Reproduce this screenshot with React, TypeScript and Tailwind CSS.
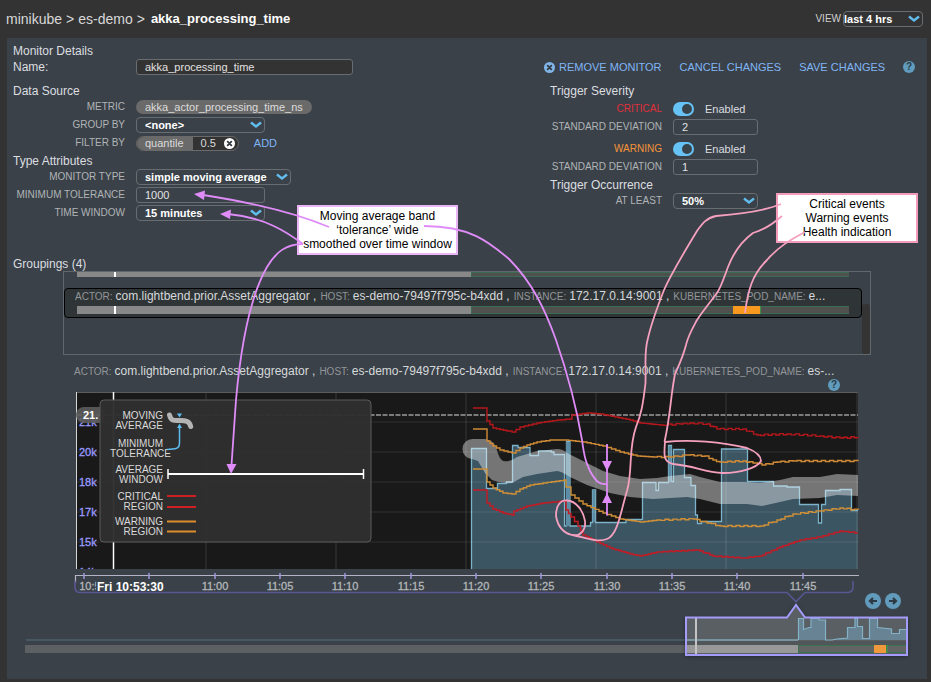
import type { ReactNode } from "react";

type Point = [number, number];

/* Turns control points into a staircase line, as the monitor samples are held between readings. */
function stairs(points: Point[], step = 4, ripple = 0): string {
  let d = `M${points[0][0]} ${points[0][1]}`;
  let n = 0;
  for (let i = 1; i < points.length; i++) {
    const [x0, y0] = points[i - 1];
    const [x1, y1] = points[i];
    if (x1 - x0 <= step) {
      d += ` H${x1} V${y1}`;
      continue;
    }
    const count = Math.max(1, Math.round((x1 - x0) / step));
    for (let k = 1; k <= count; k++) {
      const y = y0 + ((y1 - y0) * k) / count;
      const wobble = k < count && x0 > 640 ? (n % 2 ? ripple : -ripple) : 0;
      n++;
      d += ` H${(x0 + ((x1 - x0) * k) / count).toFixed(1)} V${(y + wobble).toFixed(1)}`;
    }
  }
  return d;
}

const criticalHigh: Point[] = [
  [473, 408], [486, 408], [487, 421], [493, 428], [507, 431], [512, 432], [520, 427], [537, 423], [557, 420],
  [570, 419], [572, 415], [587, 413], [600, 414], [630, 420], [640, 423], [660, 425], [680, 424], [690, 423],
  [707, 424], [717, 429], [743, 429], [757, 435], [787, 434], [820, 436], [840, 438], [858, 437],
];
const warningHigh: Point[] = [
  [473, 429], [486, 429], [487, 441], [493, 446], [500, 450], [512, 453], [520, 448], [527, 445], [537, 442],
  [550, 440], [565, 440], [583, 442], [603, 446], [620, 452], [637, 456], [653, 457], [670, 457], [687, 455],
  [705, 456], [713, 460], [720, 462], [743, 461], [753, 463], [762, 465], [777, 462], [793, 461], [858, 461],
];
const warningLow: Point[] = [
  [473, 469], [486, 469], [487, 482], [493, 488], [503, 493], [512, 494], [520, 489], [530, 485], [543, 483],
  [564, 480], [566, 487], [571, 495], [583, 504], [603, 513], [620, 519], [640, 522], [657, 520], [693, 519],
  [707, 523], [720, 526], [760, 526], [777, 520], [793, 514], [820, 511], [840, 508], [858, 510],
];
const criticalLow: Point[] = [
  [473, 490], [486, 490], [487, 503], [493, 509], [503, 513], [512, 515], [514, 511], [527, 506], [543, 503],
  [564, 501], [566, 510], [571, 517], [578, 526], [583, 535], [597, 542], [610, 548], [630, 554], [640, 556],
  [657, 552], [697, 550], [713, 556], [743, 558], [760, 556], [780, 547], [800, 540], [820, 537], [840, 531], [858, 533],
];

const seriesTop =
  "M471.5 569 V448.5 H486.5 V488.5 H497.5 V483.5 H506.5 V482 H512.5 V445.5 H518 V447.5 H530 V455.5 H538.5 V451 H551.5 V452 H554 V454.5 H564.5 V526 H566.5 V441.5 H570 V526 H590.5 V522.5 H592.5 V490 H595.5 V522.5 H626 V519.5 H642.5 V482.5 H656 V490.5 H658.5 V482.5 H668.5 V445.5 H671.5 V481.5 H673.5 V449.5 H684.5 V477.5 H691 V485.5 H695.5 V515 H697.5 V523.5 H701.5 V521.5 H721.5 V449 H747.5 V481.5 H773.5 V486 H787 V487 H799.5 V504.5 H818.5 V523 H821.5 V504.5 H825.5 V490.5 H840 V489.5 H851.5 V510.5 H858";

const bandPath =
  "M473 439 L485 439 Q493 440 496 447 Q499 459 503 461 Q511 462 517 457 L537 451 L557 449 Q563 449 567 453 L587 463 L603 471 L620 476 L640 479 L657 478 L670 476 L690 474 L700 477 L720 482 L743 482 L760 483 L780 480 L793 477 L820 477 L837 474 L858 475 V496 L837 495 L820 498 L793 499 L780 502 L762 506 L747 504 L720 504 L700 499 L687 497 L653 499 L630 497 L610 493 L587 485 L570 477 Q561 471 557 471 L537 474 L523 477 L512 483 Q502 484 492 480 L485 473 L478 461 L472 459 A10 10 0 0 1 473 439 Z";

const timeTicks: [number, string][] = [
  [149, "10:55"], [215, "11:00"], [280, "11:05"], [345, "11:10"], [411, "11:15"], [476, "11:20"],
  [541, "11:25"], [607, "11:30"], [672, "11:35"], [737, "11:40"], [803, "11:45"],
];

function Heading({ children }: { children: ReactNode }) {
  return <h2 className="h-4 pl-1.5 text-xs leading-[18px] text-[#dcdee0]">{children}</h2>;
}

function Row({ label, id, tone = "text-[#b0b4b7]", children }: { label: string; id?: string; tone?: string; children: ReactNode }) {
  return (
    <div className="flex h-[18px] items-center gap-[11px]">
      <label htmlFor={id} className={`w-[118px] shrink-0 whitespace-nowrap text-right text-[10px] leading-4 ${tone}`}>
        {label}
      </label>
      {children}
    </div>
  );
}

function Select({ id, value, width, pad = "pl-2" }: { id: string; value: string; width: string; pad?: string }) {
  return (
    <span className={`relative inline-block h-4 ${width}`}>
      <select
        id={id}
        defaultValue={value}
        className={`block h-4 w-full appearance-none rounded-[4px] border border-[#686d71] bg-transparent ${pad} text-[11px] font-bold leading-3 text-white outline-none`}
      >
        <option>{value}</option>
      </select>
      <svg viewBox="0 0 12 8" className="pointer-events-none absolute right-[3px] top-1 h-2 w-3 text-[#62bdec]" aria-hidden="true">
        <path d="M1 1.500 L6 5.500 L11 1.500" fill="none" stroke="currentColor" strokeWidth="2.400" />
      </svg>
    </span>
  );
}

function TextBox({ id, value, width, fill = "bg-transparent" }: { id: string; value: string; width: string; fill?: string }) {
  return (
    <input
      id={id}
      type="text"
      defaultValue={value}
      className={`h-4 rounded-[3px] border border-[#686d71] pl-2 text-[11px] leading-3 text-[#e2e2e2] outline-none ${fill} ${width}`}
    />
  );
}

function Toggle({ id }: { id: string }) {
  return (
    <>
      <input
        id={id}
        type="checkbox"
        defaultChecked
        className="relative h-[14px] w-[21px] appearance-none rounded-full bg-[#67c2f5] before:absolute before:right-0.5 before:top-0.5 before:h-2.5 before:w-2.5 before:rounded-full before:bg-[#39434a]"
      />
      <span className="text-[11px] leading-4 text-[#dcdee0]">Enabled</span>
    </>
  );
}

function Help() {
  return (
    <button aria-label="Help" className="flex h-3 w-3 items-center justify-center rounded-full bg-[#5f9cbd] text-[10px] font-bold leading-3 text-[#2c3a43]">
      ?
    </button>
  );
}

function CrossDisc({ className }: { className: string }) {
  return (
    <svg viewBox="0 0 12 12" className={`h-[11px] w-[11px] ${className}`} aria-hidden="true">
      <circle cx="6" cy="6" r="6" fill="currentColor" />
      <path d="M4 4 L8 8 M8 4 L4 8" stroke="#333b41" strokeWidth="2" strokeLinecap="round" />
    </svg>
  );
}

function GroupText({ tail }: { tail: string }) {
  const parts = [
    ["ACTOR:", "com.lightbend.prior.AssetAggregator ,"],
    ["HOST:", "es-demo-79497f795c-b4xdd ,"],
    ["INSTANCE:", "172.17.0.14:9001 ,"],
    ["KUBERNETES_POD_NAME:", tail],
  ];
  return (
    <p className="flex gap-1 whitespace-nowrap text-xs leading-[14px] text-[#d6d9db]">
      {parts.map(([name, value]) => (
        <span key={name} className="flex items-baseline gap-[3px]">
          <span className="text-[10px] text-[#92969a]">{name}</span>
          <span>{value}</span>
        </span>
      ))}
    </p>
  );
}

function HealthBar({ height, alert }: { height: string; alert?: boolean }) {
  return (
    <div className={`relative flex ${height}`}>
      <span className="w-[51%] bg-[#888]" />
      <span className="flex-1 border-b border-l border-t border-[#3a6b53] bg-[#50504f]" />
      <span className="absolute left-[5%] top-0 h-full w-0.5 -translate-x-0.5 bg-white" />
      {alert && <span className="absolute left-[85%] top-0 h-full w-7 border-r border-[#3f8a45] bg-[#f7981f]" />}
    </div>
  );
}

function Legend() {
  const rows: [string, string, number][] = [
    ["MOVING", "AVERAGE", 419],
    ["MINIMUM", "TOLERANCE", 447],
    ["AVERAGE", "WINDOW", 473],
    ["CRITICAL", "REGION", 500],
    ["WARNING", "REGION", 525],
  ];
  return (
    <g>
      <rect x="100" y="400" width="271" height="142" rx="4" fill="#303030" fillOpacity="0.97" stroke="#5a5a5a" />
      <g fontSize="10" fill="#dadada" textAnchor="end">
        {rows.map(([a, b, y]) => (
          <g key={y}>
            <text x="163" y={y}>{a}</text>
            <text x={b === "TOLERANCE" ? 171 : 163} y={y + 10}>{b}</text>
          </g>
        ))}
      </g>
      <path d="M169.500 415 C171 421.500 175 420.500 180 420.500 C186 420.500 189.500 421 190.700 426.500" fill="none" stroke="#b4b4b4" strokeWidth="5" strokeLinecap="round" />
      <path d="M167 449.500 L175 448.700 Q179.500 448.200 179.500 443 V427" fill="none" stroke="#5dbcf0" strokeWidth="1.500" />
      <path d="M177 413.500 H182 L179.500 417.500 Z M177 428 H182 L179.500 423.500 Z" fill="#5dbcf0" />
      <path d="M168 474 H363.500" stroke="#fff" strokeWidth="2" />
      <path d="M168 469 V479 M363.500 469 V479" stroke="#fff" strokeWidth="1.500" />
      <path d="M167 496 H196 M167 507 H196" stroke="#cc2023" strokeWidth="2" />
      <path d="M167 521.500 H196 M167 531.500 H196" stroke="#dd8c2c" strokeWidth="2" />
    </g>
  );
}

function Plot() {
  return (
    <svg viewBox="7 392 920 201" className="block h-auto w-full overflow-visible font-[Liberation_Sans]" role="img" aria-label="Processing time with moving average band">
      <clipPath id="plot-clip">
        <rect x="76" y="392" width="783" height="177" />
      </clipPath>
      <rect x="76" y="392" width="782" height="177" fill="#191919" />
      <path d="M76 392.500 H858" stroke="#5c5c5c" />
      <g clipPath="url(#plot-clip)">
        <path d={`${seriesTop} V569 Z`} fill="#3c5563" />
        <path d={seriesTop} fill="none" stroke="#7bb3ca" strokeWidth="1.300" />
        <path d="M566 526 V442 H570 V526 Z M668.500 482 V446 H671.500 V482 Z M592.500 522 V490 H595.500 V522 Z" fill="#5c8da5" />
        <path d="M206 393 V569 M336 393 V569 M466 393 V569 M596 393 V569 M726 393 V569 M857 393 V569" stroke="#fff" strokeOpacity="0.09" strokeWidth="1.500" />
        <path d="M77 422 H858 M77 452 H858 M77 482 H858 M77 512 H858 M77 542 H858" stroke="#fff" strokeOpacity="0.07" strokeWidth="1.500" />
        <path d={bandPath} fill="#fff" fillOpacity="0.4" />
        <path d="M77 415 H858" stroke="#9c9c9c" strokeWidth="1.500" strokeDasharray="5 1.500" />
        <path d={stairs(criticalHigh, 4, 0.6)} fill="none" stroke="#b5171b" strokeWidth="1.400" />
        <path d={stairs(criticalLow, 3, 0.3)} fill="none" stroke="#c01c25" strokeWidth="1.500" />
        <path d={stairs(warningHigh, 4, 0.5)} fill="none" stroke="#d08a35" strokeWidth="1.400" />
        <path d={stairs(warningLow, 4, 0.5)} fill="none" stroke="#cf9037" strokeWidth="1.400" />
        <g fontSize="11" fill="#9a9aff" stroke="#9a9aff" strokeWidth="0.300">
          <text x="79" y="426">21k</text>
          <text x="79" y="456">20k</text>
          <text x="79" y="486">18k</text>
          <text x="79" y="516">17k</text>
          <text x="79" y="546">15k</text>
          <text x="79" y="576">14k</text>
        </g>
        <path d="M76.500 392 V569" stroke="#d5d5d5" />
        <path d="M113.500 392 V569" stroke="#fff" strokeWidth="1.500" />
      </g>
      <path d="M104 407 H84 a8 8 0 0 0 0 16 H104 Z" fill="#5c5c5c" fillOpacity="0.9" />
      <text x="83" y="419" fontSize="11" fontWeight="bold" fill="#fff">21.</text>
      <Legend />

      <path d="M75.500 583 V575.500 H859" fill="none" stroke="#b4b4c2" strokeWidth="1.200" />
      <path
        d="M84 573 V579 M149 573 V579 M215 573 V579 M280 573 V579 M345 573 V579 M411 573 V579 M476 573 V579 M541 573 V579 M607 573 V579 M672 573 V579 M737 573 V579 M803 573 V579"
        stroke="#9d97dc"
        strokeWidth="1.500"
      />
      <g fontSize="11" fill="#b4b7ba" stroke="#b4b7ba" strokeWidth="0.300" textAnchor="middle">
        <text x="93" y="590">10:50</text>
        {timeTicks.map(([x, label]) => (
          <text key={label} x={x} y="590">{label}</text>
        ))}
      </g>
      <rect x="96" y="580" width="67" height="11" fill="#3a4148" fillOpacity="0.9" />
      <text x="97" y="591" fontSize="12" fontWeight="bold" fill="#fff">Fri 10:53:30</text>
      <path d="M75 581 V587 Q75 592.500 80 592.500 H787 L796 601.500 L805 592.500 H847 Q853 592.500 853 587 V581" fill="none" stroke="#5a5692" strokeWidth="1.600" />
    </svg>
  );
}

function Overview() {
  const mini =
    "M798.500 640 V618.500 H803.500 V629.500 L809 627.500 H811 V618.500 H819 V620 H825.500 V640 H832 L837 639 L847.500 638 V627.500 H855 V618.500 H857.500 V626.500 H862.500 V638.500 H869.500 V618.500 H877.500 V627.500 L891.500 629 V633.500 H899.500 V629.500 H906";
  return (
    <svg viewBox="7 609 920 70" className="block h-auto w-full overflow-visible" role="img" aria-label="Overview of the whole time range">
      <path d="M26 640 H798" stroke="#4b626c" strokeWidth="1.500" />
      <rect x="25" y="645" width="661" height="8" fill="#5c6063" />
      <path d="M686 618 H787 L796 605 L805 618 H907 V655 H686 Z" fill="#5a5f63" style={{ filter: "drop-shadow(0 1px 2px #1b1f22)" }} />
      <path d="M687 640 H798" stroke="#86a6b3" strokeWidth="1.500" />
      <rect x="687" y="641" width="219" height="4" fill="#515659" />
      <rect x="687" y="645" width="111" height="8" fill="#989898" />
      <rect x="798.500" y="645.500" width="108" height="7" fill="#636565" stroke="#3a7350" />
      <rect x="874" y="645" width="12" height="8" fill="#ee9a3c" />
      <path d="M887 645 V653" stroke="#3f9447" strokeWidth="1.500" />
      <path d={`${mini} V640 Z`} fill="#678394" />
      <path d={mini} fill="none" stroke="#83b2c6" strokeWidth="1.200" />
      <path d="M696 618 V654" stroke="#c4c4c4" strokeWidth="2" />
      <path d="M686 617.500 H787 L796 605 L805 617.500 H907 V655 H686 Z" fill="none" stroke="#a59bfb" strokeWidth="2" />
    </svg>
  );
}

function StepButton({ flip, label }: { flip?: boolean; label: string }) {
  return (
    <button aria-label={label} className="h-4 w-4">
      <svg viewBox="0 0 16 16" className={`h-4 w-4 ${flip ? "rotate-180" : ""}`}>
        <circle cx="8" cy="8" r="8" fill="#629abb" />
        <path d="M12 8 H5.500 M8 5 L5 8 L8 11" fill="none" stroke="#2d3a43" strokeWidth="2.200" />
      </svg>
    </button>
  );
}

function Annotations() {
  return (
    <>
      <p className="absolute left-[297px] top-[205px] w-[161px] whitespace-nowrap border-2 border-[#eab4f7] bg-white py-0.5 text-center text-xs leading-[14px] text-black">
        Moving average band<br />‘tolerance’ wide<br />smoothed over time window
      </p>
      <p className="absolute left-[776px] top-[193px] w-[142px] whitespace-nowrap border-2 border-[#f49bbb] bg-white py-0.5 text-center text-xs leading-[14px] text-black">
        Critical events<br />Warning events<br />Health indication
      </p>
      <svg viewBox="0 0 931 682" className="pointer-events-none absolute left-0 top-0 h-[682px] w-[931px]" aria-hidden="true">
        <g fill="none" stroke="#df8cf8" strokeWidth="1.800">
          <path d="M329 227 C300 215 255 203 203 195" />
          <path d="M303 244 C288 233 265 217 228 214" />
          <path d="M303 244 C286 244 276 252 267 267 C248 300 240 355 236 400 L231.500 465" />
          <path d="M424 226 C470 226 489 242 509 259 C533 283 546 312 556 340 C568 375 577 410 582 440 C585 462 587 464 590 471 C596 482 600 485 607 484" />
          <path d="M607 444 V515.500" />
        </g>
        <g fill="#df8cf8">
          <path d="M194 194 L205 190.500 L204 200 Z" />
          <path d="M220 214 L231 209.500 L230 219 Z" />
          <path d="M226.500 464 H236.500 L231 474 Z" />
          <path d="M602 461 H612 L607 471 Z M602 503 H612 L607 493 Z" />
        </g>
        <g fill="none" stroke="#f5a0bf" strokeWidth="1.800">
          <path d="M781 204 C765 211 740 214 716 216 C706 218 702 224 697 231 C682 256 672 272 664 290 C657 308 651 325 648 338 C644 352 646 360 645.500 383 C643 405 641 415 636 427 C628 450 633 470 627 491 C621 510 618 535 607 539 C597 543 584 537 572 535" />
          <path d="M567 500.500 C560 500 556 506 556 516 C558 528 564 533 572 535 C580 537 586 530 585 521 C583 510 576 501 567 500.500 Z" />
          <path d="M782 216 C773 224 763 230 753 233 C742 241 733 254 728 267 C722 283 721 287 717 293 C708 305 702 312 697 320 C691 331 688 336 686 345 C683 357 679 365 675 374 C670 400 671 412 664.500 442" />
          <path d="M665 442 C690 439 722 442 747 448 C757 452 761 457 761 461 C757 468 740 473 723 473 C704 472 695 466 673 464 C663 462 664 455 665 442 Z" />
          <path d="M805 232 C790 240 778 247 767 260 C752 275 748 290 745 313" />
        </g>
      </svg>
    </>
  );
}

export default function App() {
  return (
    <div className="relative min-h-screen bg-[#333] font-[Liberation_Sans,Arial,sans-serif]">
      <header className="flex h-[38px] items-center justify-between pl-1.5 pr-2">
        <h1 className="flex gap-1 text-sm leading-4 text-[#d8d8d8]">
          <a href="#minikube">minikube</a>
          <span>&gt;</span>
          <a href="#es-demo">es-demo</a>
          <span>&gt;</span>
          <span className="pl-0.5 text-[13px] font-bold text-white">akka_processing_time</span>
        </h1>
        <div className="flex items-center gap-0.5">
          <label htmlFor="view" className="text-[10px] leading-4 text-[#d0d0d0]">VIEW</label>
          <Select id="view" value="last 4 hrs" width="w-20" pad="pl-0" />
        </div>
      </header>

      <main className="ml-[7px] mr-1 bg-[#3a4148] pt-1">
        <div className="flex">
          <section className="min-w-0 flex-1">
            <Heading>Monitor Details</Heading>
            <div className="flex h-[18px] items-center">
              <label htmlFor="name" className="w-[129px] pl-1.5 text-xs leading-4 text-[#dcdee0]">Name:</label>
              <TextBox id="name" value="akka_processing_time" width="w-[217px]" fill="bg-[#333]" />
            </div>
            <div className="h-1.5" />
            <Heading>Data Source</Heading>
            <Row label="METRIC">
              <span className="h-[14px] rounded-full bg-[#6a6a6a] px-[9px] text-[11px] leading-[14px] text-[#dcdcdc]">akka_actor_processing_time_ns</span>
            </Row>
            <Row label="GROUP BY" id="group"><Select id="group" value="<none>" width="w-[129px]" /></Row>
            <Row label="FILTER BY">
              <span className="flex h-[15px] items-center overflow-hidden rounded-full border border-[#6a6a6a] bg-[#333] text-[11px] leading-3 text-[#dcdcdc]">
                <span className="bg-[#6a6a6a] py-px pl-2 pr-[9px]">quantile</span>
                <span className="px-2">0.5</span>
                <button aria-label="Remove filter" className="mr-[3px]"><CrossDisc className="text-white" /></button>
              </span>
              <button className="ml-1 text-[11px] leading-4 text-[#80b5f5]">ADD</button>
            </Row>
            <Heading>Type Attributes</Heading>
            <Row label="MONITOR TYPE" id="type"><Select id="type" value="simple moving average" width="w-[155px]" /></Row>
            <Row label="MINIMUM TOLERANCE" id="tolerance"><TextBox id="tolerance" value="1000" width="w-[129px]" /></Row>
            <Row label="TIME WINDOW" id="window"><Select id="window" value="15 minutes" width="w-[129px]" /></Row>
          </section>

          <section className="w-[383px] shrink-0">
            <div className="mt-4 flex h-[18px] items-center whitespace-nowrap text-[11px] leading-4 text-[#80b5f5]">
              <button className="flex items-center gap-1"><CrossDisc className="text-[#80b5e8]" />REMOVE MONITOR</button>
              <button className="ml-[18px]">CANCEL CHANGES</button>
              <button className="ml-[18px]">SAVE CHANGES</button>
              <span className="ml-auto mr-3"><Help /></span>
            </div>
            <div className="h-1.5" />
            <Heading>Trigger Severity</Heading>
            <div className="h-0.5" />
            <Row label="CRITICAL" id="critical" tone="text-[#e02f3c]"><Toggle id="critical" /></Row>
            <Row label="STANDARD DEVIATION" id="critical-dev"><TextBox id="critical-dev" value="2" width="w-[85px]" /></Row>
            <div className="h-1" />
            <Row label="WARNING" id="warning" tone="text-[#f59339]"><Toggle id="warning" /></Row>
            <Row label="STANDARD DEVIATION" id="warning-dev"><TextBox id="warning-dev" value="1" width="w-[85px]" /></Row>
            <Heading>Trigger Occurrence</Heading>
            <Row label="AT LEAST" id="at-least"><Select id="at-least" value="50%" width="w-[85px]" /></Row>
          </section>
        </div>

        <section className="mt-[33px]">
          <Heading>Groupings (4)</Heading>
          <div className="relative mx-14 h-[84px] border border-[#62676b]">
            <div className="ml-[13px] mr-[21px]"><HealthBar height="h-[5px]" /></div>
            <div className="mr-2 mt-[11px] h-[30px] rounded-[4px] border border-black bg-[#2f3436] pl-2.5 pr-3">
              <GroupText tail="e..." />
              <div className="ml-0.5 mt-0.5"><HealthBar height="h-2" alert /></div>
            </div>
            <span className="absolute bottom-0 right-0 h-[50px] w-2 rounded-[3px] bg-[#353434]" />
          </div>
        </section>

        <section className="pt-2">
          <div className="flex h-4 items-center pl-[67px]"><GroupText tail="es-..." /></div>
          <div className="flex h-[13px] justify-end pr-[87px]"><Help /></div>
          <Plot />
          <div className="flex h-4 justify-end gap-1 pr-[26px]">
            <StepButton label="Earlier" />
            <StepButton label="Later" flip />
          </div>
          <Overview />
        </section>
      </main>
      <Annotations />
    </div>
  );
}
